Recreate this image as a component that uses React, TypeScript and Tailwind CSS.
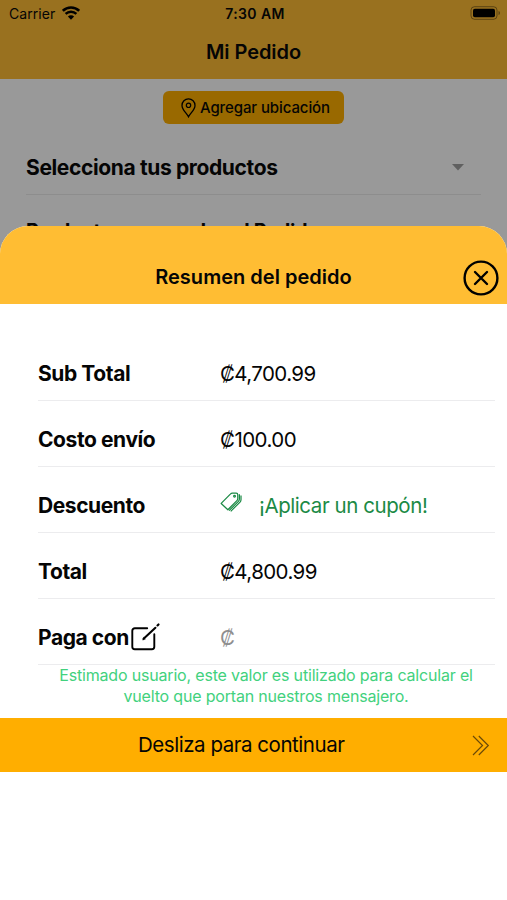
import type { ReactNode } from 'react';

function StatusBar() {
  return (
    <div className="grid h-[27px] grid-cols-3 items-center pl-[9px] pr-[6px] text-[14px]">
      <div className="flex items-center gap-[7px]">
        <span className="tracking-[0.05px]">Carrier</span>
        <svg width="18" height="14" viewBox="0 0 18 14" className="-mt-px">
          <path d="M0.8 4.8a11.8 11.8 0 0 1 16.4 0" fill="none" stroke="black" strokeWidth="2.7" />
          <path d="M3.6 7.9a7.7 7.7 0 0 1 10.8 0" fill="none" stroke="black" strokeWidth="2.4" />
          <path d="M9 13.7 5.9 10.5a4.4 4.4 0 0 1 6.2 0Z" />
        </svg>
      </div>
      <span className="text-center font-semibold tracking-[0.4px]">7:30 AM</span>
      <svg width="31" height="14" viewBox="0 0 31 14" className="-mt-px justify-self-end">
        <rect x="1" y="0.7" width="26" height="12.6" rx="3.5" fill="none" stroke="black" strokeOpacity="0.4" />
        <rect x="3" y="2.7" width="22" height="8.6" rx="1.8" />
        <path d="M28.5 5v4c2-.6 2-3.4 0-4Z" fillOpacity="0.4" />
      </svg>
    </div>
  );
}

function OrderScreen() {
  return (
    <div className="bg-[#999999]">
      <header className="h-[79px] bg-[#99711f]">
        <StatusBar />
        <h1 className="pt-[10px] text-center text-[20px] leading-[30px] font-semibold tracking-[-0.05px]">Mi Pedido</h1>
      </header>

      <div className="flex justify-center pt-3">
        <button className="flex h-[33px] w-[181px] items-center gap-[4px] rounded-md bg-[#996900] pl-[18px] text-[15px] font-medium">
          <svg width="15" height="20" viewBox="0 0 15 20" fill="none" stroke="black" className="shrink-0">
            <path d="M7.5 18.8C5.8 15.2 1 12 1 7.4a6.5 6.5 0 0 1 13 0c0 4.6-4.8 7.8-6.5 11.4Z" strokeWidth="1.3" />
            <circle cx="7.5" cy="7.3" r="2.2" strokeWidth="1.2" />
          </svg>
          <span className="pt-px whitespace-nowrap tracking-[-0.1px]">Agregar ubicación</span>
        </button>
      </div>

      <div className="mx-[26px] flex h-[71px] items-center justify-between border-b border-[#8d8d8d] pt-4 pr-[17px]">
        <h2 className="pt-px text-[21px] font-bold tracking-[-0.37px] whitespace-nowrap">Selecciona tus productos</h2>
        <svg width="12" height="7" viewBox="0 0 12 7">
          <path d="M0 0h12L6 6.5Z" fill="#606060" />
        </svg>
      </div>
      <h2 className="px-[26px] pt-[22px] text-[20px] leading-[28px] font-bold tracking-[-0.35px]">
        Productos agregados al Pedido
      </h2>
    </div>
  );
}

function Row({ label, children }: { label: ReactNode; children: ReactNode }) {
  return (
    <div className="flex h-[66px] items-end border-b border-[#ececee] pb-[11px] text-[20.5px] leading-[31px]">
      <div className="flex w-[182px] items-center text-[21px] font-bold tracking-[-0.42px]">{label}</div>
      <div className="flex items-center whitespace-nowrap">{children}</div>
    </div>
  );
}

function TagsIcon() {
  return (
    <svg width="22" height="20" viewBox="0 0 23 21" fill="none" stroke="#1b8a45" strokeWidth="1.3" strokeLinejoin="round" className="-mt-[7px]">
      <path d="M1.2 12 10.8 2.2Q11.7 1.2 13 1.2H17Q18.6 1.2 18.6 2.8V7Q18.6 8.2 17.7 9.1L8.2 18.7Z" />
      <circle cx="15.2" cy="4.5" r="0.9" />
      <path d="M20.3 2.3V7.3Q20.3 8.8 19.3 9.8L9.5 19.5" />
      <path d="M22 3.6V8.2Q22 9.6 21 10.6L11.2 20.3" />
    </svg>
  );
}

function EditIcon() {
  return (
    <svg width="29" height="28" viewBox="0 0 29 28" fill="none" stroke="black" strokeWidth="1.9" strokeLinecap="round" className="-mt-[2px] ml-[2px]">
      <path d="M16.2 5.2H3.8a2.5 2.5 0 0 0-2.5 2.5v16a2.5 2.5 0 0 0 2.5 2.5h17a2.5 2.5 0 0 0 2.5-2.5V11.2" />
      <path d="m12.6 15.8 11.8-11" strokeWidth="2.1" />
      <path d="m26.5 2.4 1-1" strokeWidth="2.1" />
      <path d="m11.8 16.7.9-2.3 1.4 1.4Z" fill="black" strokeWidth="0.5" />
    </svg>
  );
}

function SummarySheet() {
  return (
    <section className="relative flex flex-1 flex-col overflow-hidden rounded-t-[28px] bg-white">
      <header className="relative flex h-[78px] items-center justify-center bg-[#ffbd33] pt-[24px]">
        <h2 className="text-[20px] leading-[30px] font-semibold tracking-[0.02px]">Resumen del pedido</h2>
        <button className="absolute top-[34px] right-[8px]" aria-label="Cerrar">
          <svg width="36" height="36" viewBox="0 0 36 36" fill="none" stroke="black" strokeWidth="2.4" strokeLinecap="round">
            <circle cx="18" cy="18" r="16.4" />
            <path d="m12 12 12 12M24 12 12 24" />
          </svg>
        </button>
      </header>

      <div className="mr-3 ml-[38px] pt-[31px]">
        <Row label="Sub Total">
          <span className="tracking-[-0.6px]">₡4,700.99</span>
        </Row>
        <Row label="Costo envío">
          <span className="tracking-[-0.55px]">₡100.00</span>
        </Row>
        <Row label="Descuento">
          <TagsIcon />
          <span className="ml-[17px] tracking-[-0.43px] text-[#1b8a45]">¡Aplicar un cupón!</span>
        </Row>
        <Row label="Total">
          <span className="tracking-[-0.6px]">₡4,800.99</span>
        </Row>
        <Row
          label={
            <>
              Paga con
              <EditIcon />
            </>
          }
        >
          <span className="text-[#8e8e8e]">₡</span>
        </Row>
      </div>

      <p className="pl-[25px] text-center text-[16px] leading-[21px] tracking-[-0.18px] text-[#42d17d]">
        Estimado usuario, este valor es utilizado para calcular el
        <br />
        vuelto que portan nuestros mensajero.
      </p>

      <button className="mt-[11px] flex h-[54px] items-center bg-[#ffae00] pr-[17px] pl-[138px] text-[20.5px]">
        <span className="tracking-[-0.46px]">Desliza para continuar</span>
        <svg width="18" height="21" viewBox="0 0 18 21" fill="none" stroke="#6b4a08" strokeWidth="1.2" className="ml-auto">
          <path d="m1 1 9.5 9.5L1 20M6.8 1l9.5 9.5L6.8 20" />
        </svg>
      </button>
    </section>
  );
}

export default function App() {
  return (
    <main className="flex h-[900px] w-[507px] flex-col overflow-hidden bg-[#999999] font-['Inter','Liberation_Sans',sans-serif] text-[#050505]">
      <div className="h-[226px] shrink-0">
        <OrderScreen />
      </div>
      <SummarySheet />
    </main>
  );
}
